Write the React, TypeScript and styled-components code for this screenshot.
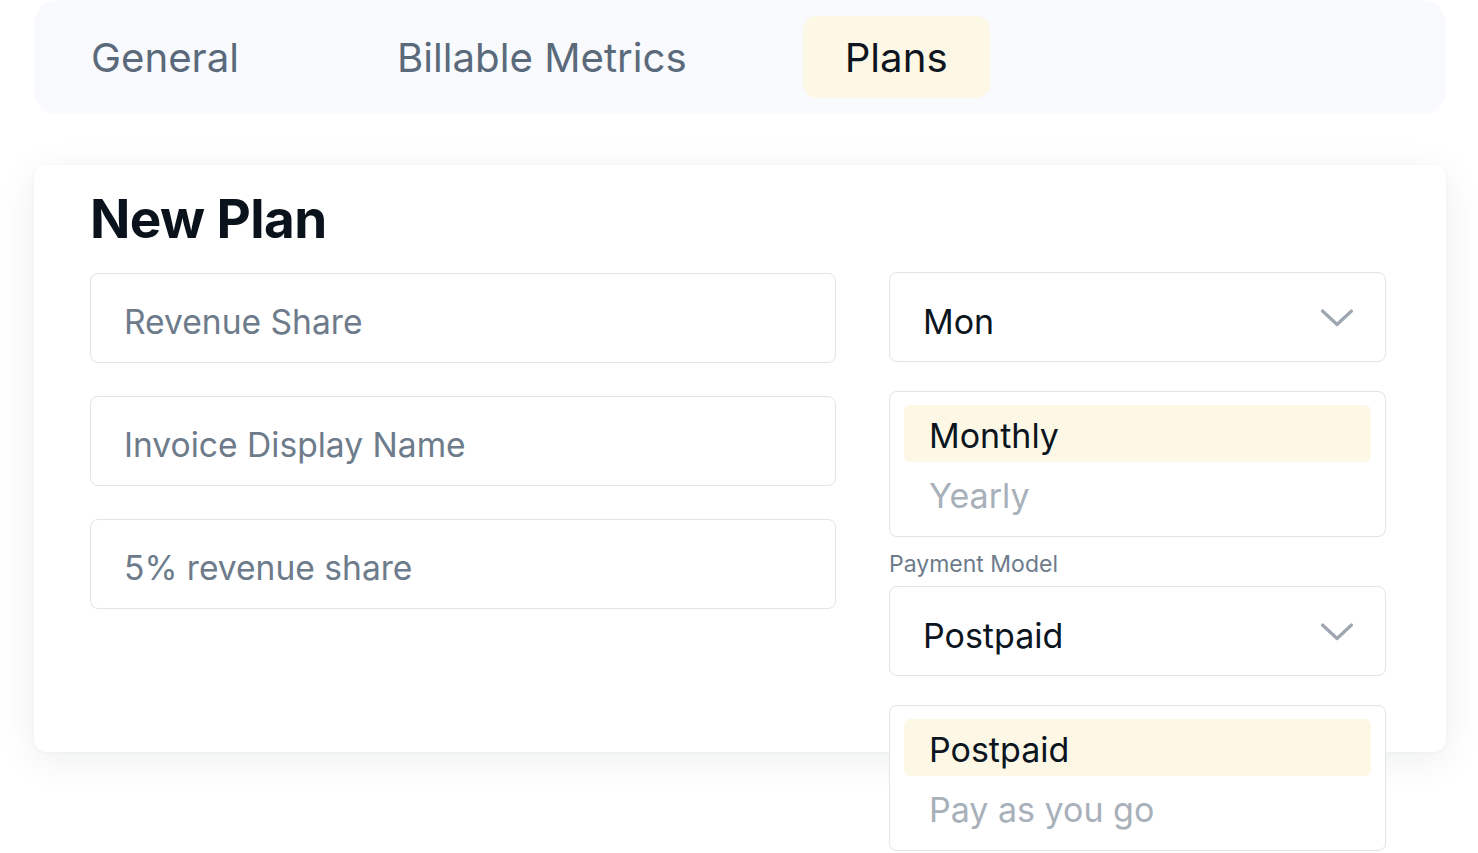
import React from "react";
import styled, { createGlobalStyle } from "styled-components";

const GlobalStyle = createGlobalStyle`
  html, body { margin: 0; padding: 0; background: #ffffff; }
  body { font-family: "Inter", "Liberation Sans", sans-serif; -webkit-font-smoothing: antialiased; }
  * { box-sizing: border-box; }
`;

const Page = styled.div`
  width: 1478px;
  height: 853px;
  overflow: hidden;
  padding: 0 32px 0 34px;
  display: flex;
  flex-direction: column;
  gap: 51px;
`;

const TabBar = styled.nav`
  height: 114px;
  background: #f8fafd;
  border-radius: 24px;
  padding: 16px 15px;
  display: flex;
  align-items: stretch;
  gap: 74px;
`;

const Tab = styled.div<{ $active?: boolean }>`
  height: 82px;
  padding: 0 42px;
  display: flex;
  align-items: center;
  border-radius: 14px;
  font-size: 40.2px;
  font-weight: 400;
  color: ${(p) => (p.$active ? "#0d1620" : "#5b6a7b")};
  background: ${(p) => (p.$active ? "#fdf7e6" : "transparent")};
`;

const Card = styled.section`
  height: 587px;
  background: #ffffff;
  border-radius: 12px;
  box-shadow: 0 8px 40px rgba(15, 23, 42, 0.07), 0 1px 4px rgba(15, 23, 42, 0.03);
  padding: 22px 60px 0 56px;
  display: flex;
  flex-direction: column;
  gap: 22px;
`;

const Title = styled.h1`
  margin: 0;
  font-size: 53px;
  line-height: 64px;
  font-weight: 700;
  letter-spacing: -0.6px;
  color: #0a121c;
`;

const Columns = styled.div`
  display: grid;
  grid-template-columns: 746px 497px;
  gap: 53px;
  align-items: start;
`;

const LeftColumn = styled.div`
  display: flex;
  flex-direction: column;
  gap: 33px;
`;

const RightColumn = styled.div`
  display: flex;
  flex-direction: column;
  margin-top: -1px;
`;

const Field = styled.div`
  height: 90px;
  border: 1.5px solid #e1e4e9;
  border-radius: 8px;
  padding: 7px 33px 0;
  display: flex;
  align-items: center;
  font-size: 33.6px;
  color: #6d7b8b;
  background: #fff;
`;

const Select = styled.div`
  height: 90px;
  border: 1.5px solid #e1e4e9;
  border-radius: 8px;
  padding: 0 31px 0 33px;
  display: flex;
  align-items: center;
  justify-content: space-between;
  font-size: 34px;
  color: #0b1520;
  background: #fff;
`;

const SelectValue = styled.span`
  padding-top: 8px;
`;

const ChevronBox = styled.span`
  display: flex;
  padding-top: 2px;
`;

const List = styled.div<{ $gapTop: number }>`
  margin-top: ${(p) => p.$gapTop}px;
  border: 1.5px solid #e1e4e9;
  border-radius: 8px;
  padding: 13px 14px 14px;
  background: #fff;
  display: flex;
  flex-direction: column;
  gap: 3px;
`;

const Option = styled.div<{ $selected?: boolean }>`
  height: 57px;
  padding: 4px 25px 0;
  display: flex;
  align-items: center;
  border-radius: 6px;
  font-size: 34px;
  color: ${(p) => (p.$selected ? "#0b1520" : "#a8b0ba")};
  background: ${(p) => (p.$selected ? "#fdf7e6" : "transparent")};
`;

const Label = styled.div`
  margin-top: 13px;
  margin-bottom: 8px;
  font-size: 23px;
  line-height: 28px;
  color: #6d7b8b;
`;

const Chevron = () => (
  <ChevronBox>
    <svg width="34" height="20" viewBox="0 0 34 20" fill="none">
      <path d="M2.5 3 L17 16.5 L31.5 3" stroke="#9ea6b0" strokeWidth="3.2" strokeLinecap="round" strokeLinejoin="round" />
    </svg>
  </ChevronBox>
);

export default function App() {
  return (
    <>
      <GlobalStyle />
      <Page>
        <TabBar>
          <Tab>General</Tab>
          <Tab>Billable Metrics</Tab>
          <Tab $active>Plans</Tab>
        </TabBar>
        <Card>
          <Title>New Plan</Title>
          <Columns>
            <LeftColumn>
              <Field>Revenue Share</Field>
              <Field>Invoice Display Name</Field>
              <Field>5% revenue share</Field>
            </LeftColumn>
            <RightColumn>
              <Select>
                <SelectValue>Mon</SelectValue>
                <Chevron />
              </Select>
              <List $gapTop={29}>
                <Option $selected>Monthly</Option>
                <Option>Yearly</Option>
              </List>
              <Label>Payment Model</Label>
              <Select>
                <SelectValue>Postpaid</SelectValue>
                <Chevron />
              </Select>
              <List $gapTop={29}>
                <Option $selected>Postpaid</Option>
                <Option>Pay as you go</Option>
              </List>
            </RightColumn>
          </Columns>
        </Card>
      </Page>
    </>
  );
}
